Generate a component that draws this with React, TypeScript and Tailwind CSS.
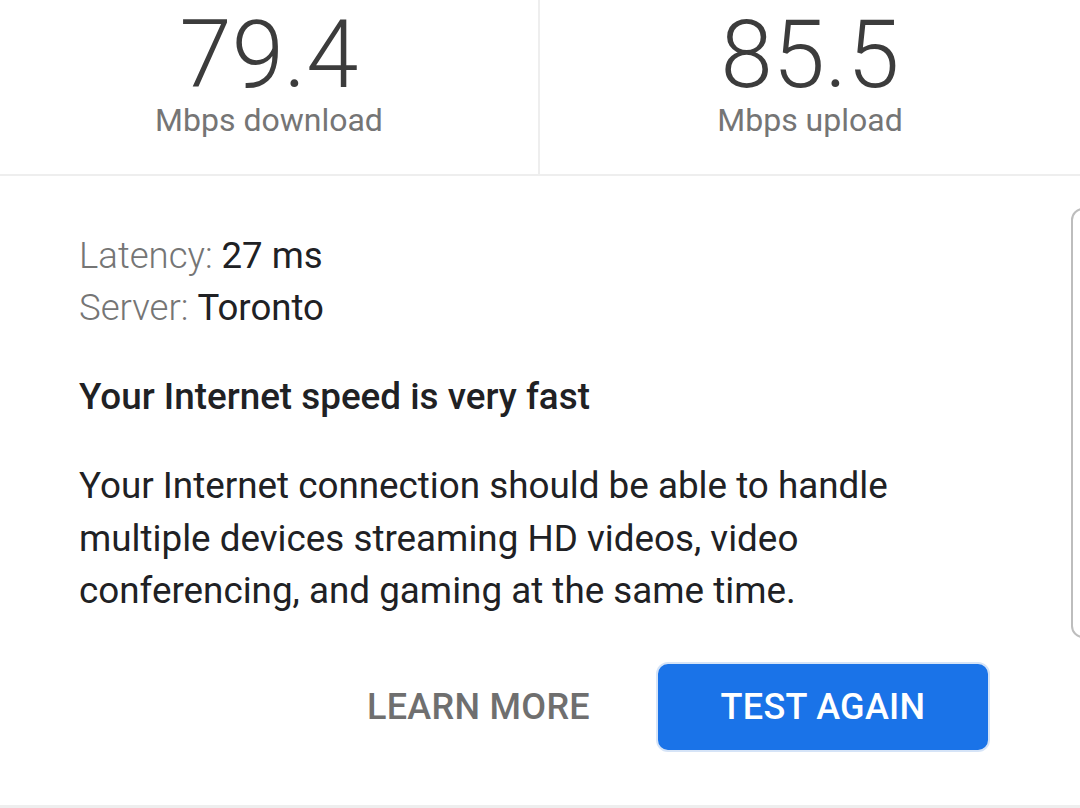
export default function App() {
  return (
    <div className="relative w-[1080px] h-[808px] overflow-hidden bg-white font-['Roboto',sans-serif]">
      {/* Results */}
      <div className="grid grid-cols-2 h-[176px] border-b-2 border-[#eeeeee]">
        <div className="flex flex-col items-center border-r-2 border-[#eeeeee]">
          <div className="mt-[9px] text-[94px] leading-[92px] font-light text-[#3c3c3c]">79.4</div>
          <div className="mt-[2px] text-[32px] leading-[34px] text-[#757575]">Mbps download</div>
        </div>
        <div className="flex flex-col items-center">
          <div className="mt-[9px] text-[94px] leading-[92px] font-light text-[#3c3c3c]">85.5</div>
          <div className="mt-[2px] text-[32px] leading-[34px] text-[#757575]">Mbps upload</div>
        </div>
      </div>

      {/* Details */}
      <div className="px-[79px] pt-[54px]">
        <div className="text-[36.6px] leading-[52px]">
          <p>
            <span className="font-light text-[#757575]">Latency: </span>
            <span className="text-[#202124]">27 ms</span>
          </p>
          <p>
            <span className="font-light text-[#757575]">Server: </span>
            <span className="text-[#202124]">Toronto</span>
          </p>
        </div>
        <h2 className="mt-[37px] text-[36.8px] leading-[52px] font-medium text-[#202124]">
          Your Internet speed is very fast
        </h2>
        <p className="mt-[37px] text-[36.8px] leading-[52.5px] text-[#202124]">
          Your Internet connection should be able to handle multiple devices streaming HD videos, video conferencing,
          and gaming at the same time.
        </p>
        <div className="mt-[44px] flex items-center justify-end gap-[66px] pr-[11px]">
          <button className="text-[36px] font-medium tracking-[0.3px] text-[#6f6f6f]">LEARN MORE</button>
          <button className="w-[334px] h-[90px] rounded-[12px] border-2 border-[#d6e4f7] bg-[#1a73e8] text-[36px] font-medium tracking-[0.3px] text-white">
            TEST AGAIN
          </button>
        </div>
      </div>

      {/* side handle */}
      <div className="absolute left-[1071px] top-[208px] w-[30px] h-[430px] rounded-[12px] border-2 border-[#bdbdbd]" />

      {/* bottom line */}
      <div className="absolute left-0 bottom-0 w-full h-[3px] bg-[#eeeeee]" />
    </div>
  );
}
